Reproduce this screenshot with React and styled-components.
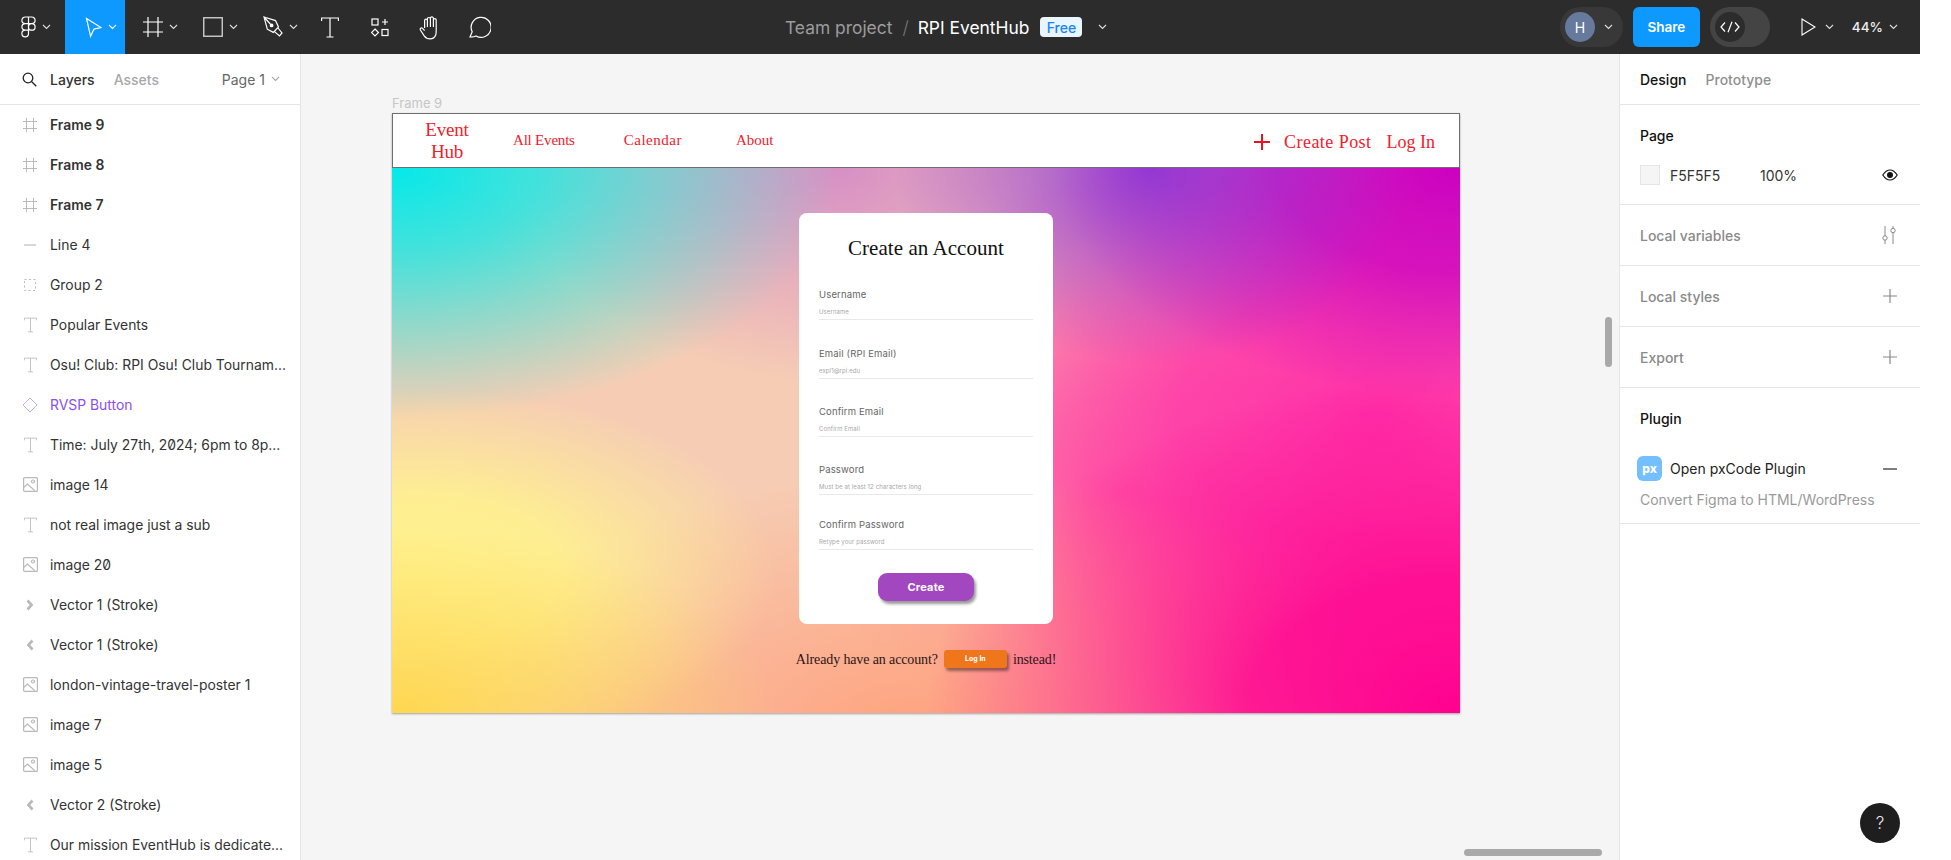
import React from "react";
import styled, { createGlobalStyle } from "styled-components";

const Global = createGlobalStyle`
  html, body { margin: 0; padding: 0; background: #fff; overflow: hidden; }
  * { box-sizing: border-box; }
  body { font-family: Inter, "Liberation Sans", sans-serif; }
`;
const DISPLAY = `"Liberation Serif", serif`;

const Shell = styled.div`
  width: 1920px; height: 860px; display: flex; flex-direction: column; overflow: hidden;
`;
const TopBar = styled.header`
  height: 54px; flex: none; background: #2c2c2c; display: flex; align-items: center; color: #fff;
`;
const ToolGroup = styled.div`
  display: flex; align-items: stretch; height: 54px; flex: none;
`;
const Tool = styled.div`
  width: ${p => p.$w || 60}px; height: 54px; display: flex; align-items: center; justify-content: center; gap: 6px;
  background: ${p => (p.$active ? "#0d99ff" : "transparent")};
  padding-left: ${p => p.$pl || 0}px;
`;
const TitleBlock = styled.div`
  display: flex; align-items: center; margin-left: 280px; flex: none; font-size: 17.4px; height: 54px;
`;
const TeamName = styled.span` color: #9c9c9c; `;
const Slash = styled.span` color: #777; margin: 0 9px 0 10px; font-size: 18px; font-weight: 300; `;
const FileName = styled.span` color: #fff; `;
const FreeBadge = styled.span`
  margin-left: 11px; width: 42px; height: 20px; border-radius: 4px; background: #e9f5ff; color: #1a84f5;
  font-size: 14px; font-weight: 500; display: flex; align-items: center; justify-content: center;
`;
const TitleChevron = styled.span` margin-left: 16px; display: flex; `;
const RightTools = styled.div`
  margin-left: auto; display: flex; align-items: center; height: 54px;
`;
const UserPill = styled.div`
  width: 63px; height: 40px; border-radius: 20px; background: #383838; display: flex; align-items: center; padding-left: 5px; gap: 9px;
`;
const Avatar = styled.div`
  width: 30px; height: 30px; border-radius: 50%; background: #667a9e; display: flex; align-items: center; justify-content: center; font-size: 14px; color: #fff;
`;
const ShareButton = styled.div`
  margin-left: 10px; width: 67px; height: 40px; border-radius: 6px; background: #0d99ff; font-size: 13.5px; font-weight: 600;
  display: flex; align-items: center; justify-content: center; color: #fff;
`;
const CodeToggle = styled.div`
  margin-left: 10px; width: 60px; height: 40px; border-radius: 20px; background: #444; display: flex; align-items: center; padding-left: 5px;
`;
const CodeKnob = styled.div`
  width: 30px; height: 30px; border-radius: 50%; background: #2c2c2c; display: flex; align-items: center; justify-content: center;
`;
const PlayGroup = styled.div`
  margin-left: 31px; display: flex; align-items: center; gap: 9px;
`;
const ZoomGroup = styled.div`
  margin: 0 22px 0 18px; display: flex; align-items: center; gap: 6px; font-size: 13.5px; font-weight: 500; color: #eee;
`;

const Main = styled.div` flex: 1; display: flex; min-height: 0; `;
const LeftPanel = styled.aside`
  width: 301px; flex: none; background: #fff; border-right: 1px solid #e6e6e6; display: flex; flex-direction: column; overflow: hidden;
`;
const PanelHeader = styled.div`
  height: 51px; flex: none; border-bottom: 1px solid #e6e6e6; display: flex; align-items: center; font-size: 14px;
  padding: ${p => p.$pad || "0 0 0 22px"};
`;
const HeaderTab = styled.span`
  font-weight: 500; color: ${p => (p.$on ? p.$on : "#a8a8a8")}; margin-left: ${p => p.$ml || 0}px;
`;
const PageSelect = styled.span`
  margin-left: auto; margin-right: 20px; color: #666; display: flex; align-items: center; gap: 6px;
`;
const LayerList = styled.div` display: flex; flex-direction: column; `;
const LayerRow = styled.div`
  height: 40px; flex: none; display: flex; align-items: center; padding: 0 0 1px 21px; gap: 11px; font-size: 13.9px;
  color: ${p => (p.$purple ? "#8a4ff0" : "#333")}; font-weight: ${p => (p.$bold ? 600 : 400)};
  font-feature-settings: "zero" 1; white-space: nowrap;
`;
const LayerIconBox = styled.span` width: 18px; height: 18px; display: flex; align-items: center; justify-content: center; flex: none; `;

const Canvas = styled.main`
  flex: 1; position: relative; background: #f5f5f5; padding: 41px 0 0 91px; min-width: 0;
`;
const FrameLabel = styled.div` height: 18px; font-size: 13px; color: #c6c6c6; line-height: 16px; `;
const DesignFrame = styled.div`
  width: 1068px; height: 600px; display: flex; flex-direction: column; box-shadow: 0 1px 2px rgba(0,0,0,.35);
`;
const SiteNav = styled.nav`
  height: 55px; flex: none; background: #fff; border: 1px solid #6f6f6f; display: flex; align-items: center;
  font-family: ${DISPLAY}; color: #f2202c; padding: 0 24px 0 0;
`;
const Brand = styled.div`
  width: 108px; text-align: center; font-size: 19px; line-height: 22px; letter-spacing: -.2px; padding-top: 1px;
`;
const SiteLink = styled.span`
  font-size: ${p => p.$size || 15}px; letter-spacing: ${p => p.$ls ?? 0}px; margin-left: ${p => p.$ml || 0}px; white-space: nowrap;
`;
const NavRight = styled.div` margin-left: auto; display: flex; align-items: center; padding-top: 3px; `;
const Hero = styled.section`
  flex: 1; display: flex; flex-direction: column; align-items: center; padding-top: 45px;
  background:
    radial-gradient(ellipse 24% 36% at 71% 0%, rgba(138,48,214,.9), rgba(138,48,214,0) 100%),
    radial-gradient(ellipse 42% 46% at 0% 0%, #04e9e9 0%, rgba(4,233,233,.72) 35%, rgba(4,233,233,0) 100%),
    radial-gradient(ellipse 30% 40% at 42% 0%, rgba(214,140,198,.95) 0%, rgba(214,140,198,0) 100%),
    radial-gradient(ellipse 38% 42% at 100% 0%, #cc00c0 0%, rgba(204,0,192,.8) 45%, rgba(204,0,192,0) 100%),
    radial-gradient(ellipse 50% 62% at 100% 100%, #ff0090 0%, rgba(255,0,144,.85) 40%, rgba(255,0,144,0) 100%),
    radial-gradient(ellipse 36% 34% at 0% 100%, #ffd84f 0%, rgba(255,216,79,0) 100%),
    radial-gradient(ellipse 34% 34% at 2% 74%, #fff28e 0%, rgba(255,242,142,.9) 40%, rgba(255,242,142,0) 100%),
    radial-gradient(ellipse 45% 50% at 50% 105%, #ffa07c 0%, rgba(255,160,124,0) 100%),
    radial-gradient(ellipse 46% 60% at 92% 45%, #ff2fa8 0%, rgba(255,47,168,.8) 40%, rgba(255,47,168,0) 100%),
    radial-gradient(ellipse 30% 45% at 68% 60%, #ff70a0 0%, rgba(255,112,160,0) 100%),
    #f6cdb4;
`;
const FormCard = styled.form`
  width: 254px; height: 411px; flex: none; background: #fff; border-radius: 8px; padding: 22px 20px 0; display: flex; flex-direction: column; align-items: stretch;
`;
const FormTitle = styled.h1`
  margin: 0 0 26px; height: 26px; text-align: center; font: 400 21px/26px ${DISPLAY}; color: #111; letter-spacing: .05px;
`;
const Field = styled.div`
  height: 33px; margin-bottom: ${p => p.$gap}px; display: flex; flex-direction: column; border-bottom: 1px solid #e9e9e9; flex: none;
`;
const FieldLabel = styled.span` font-size: 9.5px; line-height: 14px; margin-top: 1px; color: #666; letter-spacing: .15px; white-space: nowrap; `;
const FieldHint = styled.span` font-size: 6px; line-height: 10px; margin-top: 5px; color: #a8a8a8; letter-spacing: .1px; white-space: nowrap; `;
const CreateButton = styled.div`
  width: 96px; height: 28px; border-radius: 9px; background: #a247bf; color: #fff; font-size: 11px; font-weight: 700; align-self: center;
  display: flex; align-items: center; justify-content: center; box-shadow: 2px 3px 3px rgba(0,0,0,.4); letter-spacing: .2px;
`;
const LoginLine = styled.div`
  margin-top: 26px; display: flex; align-items: center; height: 18px; font: 400 14px/18px ${DISPLAY}; color: #2b1518; white-space: nowrap; letter-spacing: -.12px;
`;
const LoginText = styled.span` padding-top: 2px; `;
const LoginButton = styled.span`
  width: 63px; height: 18px; margin: 0 6px; border-radius: 3px; background: #f0761c; color: #fff; font: 700 7px/18px Inter, sans-serif; text-align: center;
  box-shadow: 2px 3px 3px rgba(0,0,0,.4); letter-spacing: 0;
`;
const VScroll = styled.div`
  position: absolute; right: 7px; top: 263px; width: 7px; height: 50px; border-radius: 4px; background: #a9a9a9;
`;
const HScroll = styled.div`
  position: absolute; left: 1163px; bottom: 4px; width: 138px; height: 7px; border-radius: 4px; background: #a9a9a9;
`;

const RightPanel = styled.aside`
  width: 301px; flex: none; background: #fff; border-left: 1px solid #e6e6e6; position: relative; display: flex; flex-direction: column;
`;
const Section = styled.section`
  height: ${p => p.$h}px; flex: none; border-bottom: 1px solid #e6e6e6; padding: ${p => p.$pad || "0 23px 0 20px"}; display: flex;
  flex-direction: ${p => (p.$column ? "column" : "row")}; align-items: ${p => (p.$column ? "stretch" : "center")}; justify-content: ${p => (p.$column ? "flex-start" : "space-between")};
`;
const SectionTitle = styled.span`
  font-size: 14px; font-weight: 500; color: ${p => (p.$muted ? "#8a8a8a" : "#111")};
`;
const SwatchRow = styled.div` display: flex; align-items: center; margin-top: 21px; font-size: 14px; color: #333; `;
const Swatch = styled.span` width: 20px; height: 20px; background: #f5f5f5; border: 1px solid #e6e6e6; flex: none; `;
const HexValue = styled.span` margin-left: 10px; width: 90px; `;
const RowEnd = styled.span` margin-left: auto; display: flex; `;
const PluginRow = styled.div` display: flex; align-items: center; margin: 29px 0 0 -3px; font-size: 14px; color: #222; gap: 8px; `;
const PluginIcon = styled.span`
  width: 25px; height: 25px; border-radius: 6px; background: #73bfff; color: #fff; font-size: 12px; font-weight: 800; display: flex; align-items: center; justify-content: center;
`;
const PluginNote = styled.div` margin-top: 10px; font-size: 14px; color: #9a9a9a; white-space: nowrap; `;
const HelpButton = styled.div`
  position: absolute; right: 20px; bottom: 17px; width: 40px; height: 40px; border-radius: 50%; background: #1e1e1e; color: #e8e8e8;
  display: flex; align-items: center; justify-content: center; font-size: 17px; font-weight: 300;
`;

const Svg = ({ w = 16, h = 16, vb, children, stroke = "#fff", sw = 1.2 }) => (
  <svg width={w} height={h} viewBox={vb || `0 0 ${w} ${h}`} fill="none" stroke={stroke} strokeWidth={sw}>{children}</svg>
);
const Chevron = ({ color = "#ddd" }) => (
  <Svg w={9} h={6} stroke={color} sw={1.1}><path d="M1 1l3.5 3.5L8 1" /></Svg>
);
const FigmaLogo = () => (
  <Svg w={15} h={22}>
    <path d="M7.5 1H4.2a3.3 3.3 0 0 0 0 6.6h3.3V1zM7.5 1h3.3a3.3 3.3 0 0 1 0 6.6H7.5V1zM7.5 7.6H4.2a3.3 3.3 0 0 0 0 6.6h3.3V7.6zM14.1 10.9a3.3 3.3 0 1 1-6.6 0 3.3 3.3 0 0 1 6.6 0zM7.5 14.2H4.2a3.3 3.3 0 1 0 3.3 3.3v-3.3z" />
  </Svg>
);
const Arrow = () => <Svg w={17} h={21}><path d="M1.5 1.5l14.5 9-7 1.6-3.4 7.2L1.5 1.5z" /></Svg>;
const FrameTool = ({ s = 20, c = "#fff", sw = 1.2 }) => (
  <Svg w={s} h={s} vb="0 0 20 20" stroke={c} sw={sw * (20 / s)}><path d="M5 0v20M15 0v20M0 5h20M0 15h20" /></Svg>
);
const RectTool = () => <Svg w={20} h={20}><rect x=".75" y=".75" width="18.5" height="18.5" stroke="#ccc" strokeWidth="1.4" /></Svg>;
const PenTool = () => (
  <Svg w={20} h={22}><path d="M1 1l11.5 3.6 3 6.4-5.2 5.4-6-3.2L1 1zM1 1l6.3 7M15 12l4 5-2.5 3-5-4.4" /><circle cx="8.6" cy="9.4" r="1.3" fill="#fff" /></Svg>
);
const TextTool = ({ s = 18, c = "#fff" }) => (
  <Svg w={s} h={s + 3} vb="0 0 18 21" stroke={c} sw={1.2}><path d="M.6 4V1h16.8v3M9 1v19M5.5 20h7" /></Svg>
);
const Components = () => (
  <Svg w={18} h={19}>
    <rect x="1" y="1" width="6" height="6" /><path d="M14 1v6M11 4h6" />
    <path d="M4 11l3.5 3.5L4 18 .5 14.5z" /><rect x="11" y="11.5" width="6" height="6" />
  </Svg>
);
const HandTool = () => (
  <Svg w={23} h={25}>
    <path d="M5.6 13V5.5a1.4 1.4 0 0 1 2.8 0V4a1.5 1.5 0 0 1 3 0v-.6a1.5 1.5 0 0 1 3 0V5a1.4 1.4 0 0 1 2.8 0v9c0 1 .2 4-.5 6s-2.6 3.8-5.7 3.8c-3 0-4.4-1-5.8-3L1.4 15c-.8-1.2.7-2.8 2-1.8l2.2 2.4M8.4 5.5V12M11.4 4v8M14.4 3.5V12" />
  </Svg>
);
const Comment = () => (
  <Svg w={22} h={22}><path d="M1 21l2.2-5.2A10 10 0 1 1 7 19.9c-1 .8-4 1.1-6 1.1z" /></Svg>
);
const CodeGlyph = () => <Svg w={20} h={12}><path d="M5 1.5L1 6l4 4.5M15 1.5L19 6l-4 4.5M12 .8L8 11.2" /></Svg>;
const Play = () => <Svg w={15} h={18} sw={1.1}><path d="M1 1v16l13-8z" /></Svg>;
const Search = () => <Svg w={15} h={15} stroke="#222" sw={1.3}><circle cx="6" cy="6" r="4.8" /><path d="M9.5 9.5l4.8 4.8" /></Svg>;

const G = "#b9b9b9";
const LayerImage = () => (
  <Svg w={15} h={15} stroke={G} sw={1.2}><rect x=".6" y=".6" width="13.8" height="13.8" rx="1" /><path d="M.6 10.5l4-3.5 7 6.5" /><circle cx="10" cy="4.5" r="1.5" /></Svg>
);
const LayerGroup = () => (
  <Svg w={12} h={12} stroke={G} sw={1}><rect x=".5" y=".5" width="11" height="11" strokeDasharray="2 2.5" /></Svg>
);
const LayerLine = () => <Svg w={12} h={2} stroke={G} sw={1.1}><path d="M0 1h12" /></Svg>;
const LayerDiamond = () => <Svg w={16} h={16} stroke="#c4aeea" sw={1}><path d="M8 1l7 7-7 7-7-7z" /></Svg>;
const LayerVec = ({ left }) => (
  <Svg w={8} h={12} stroke={G} sw={2.6}><path d={left ? "M6.5 1.5L2.4 6l4.1 4.5" : "M1.5 1.5L5.6 6l-4.1 4.5"} /></Svg>
);
const layerIcons = {
  frame: <FrameTool s={14} c={G} sw={1} />,
  line: <LayerLine />,
  group: <LayerGroup />,
  text: <TextTool s={13} c={G} />,
  diamond: <LayerDiamond />,
  image: <LayerImage />,
  right: <LayerVec />,
  left: <LayerVec left />,
};

const layers = [
  ["frame", "Frame 9", "bold"], ["frame", "Frame 8", "bold"], ["frame", "Frame 7", "bold"],
  ["line", "Line 4"], ["group", "Group 2"], ["text", "Popular Events"],
  ["text", "Osu! Club: RPI Osu! Club Tournam..."], ["diamond", "RVSP Button", "purple"],
  ["text", "Time: July 27th, 2024; 6pm to 8p..."], ["image", "image 14"], ["text", "not real image just a sub"],
  ["image", "image 20"], ["right", "Vector 1 (Stroke)"], ["left", "Vector 1 (Stroke)"],
  ["image", "london-vintage-travel-poster 1"], ["image", "image 7"], ["image", "image 5"],
  ["left", "Vector 2 (Stroke)"], ["text", "Our mission EventHub is dedicate..."],
];
const fields = [
  ["Username", "Username", 26], ["Email (RPI Email)", "expl1@rpi.edu", 25], ["Confirm Email", "Confirm Email", 25],
  ["Password", "Must be at least 12 characters long", 22], ["Confirm Password", "Retype your password", 23],
];
const Plus = ({ c = "#8a8a8a", s = 14, sw = 1.2 }) => <Svg w={s} h={s} stroke={c} sw={sw}><path d={`M${s / 2} 0v${s}M0 ${s / 2}h${s}`} /></Svg>;

export default function App() {
  return (
    <Shell>
      <Global />
      <TopBar>
        <ToolGroup>
          <Tool $w={65} $pl={6}><FigmaLogo /><Chevron /></Tool>
          <Tool $active $pl={12}><Arrow /><Chevron color="#fff" /></Tool>
          <Tool $pl={10}><FrameTool /><Chevron /></Tool>
          <Tool $pl={10}><RectTool /><Chevron /></Tool>
          <Tool $pl={10}><PenTool /><Chevron /></Tool>
          <Tool $w={50}><TextTool /></Tool>
          <Tool $w={50}><Components /></Tool>
          <Tool $w={50}><HandTool /></Tool>
          <Tool $w={50}><Comment /></Tool>
        </ToolGroup>
        <TitleBlock>
          <TeamName>Team project</TeamName>
          <Slash>/</Slash>
          <FileName>RPI EventHub</FileName>
          <FreeBadge>Free</FreeBadge>
          <TitleChevron><Chevron /></TitleChevron>
        </TitleBlock>
        <RightTools>
          <UserPill><Avatar>H</Avatar><Chevron /></UserPill>
          <ShareButton>Share</ShareButton>
          <CodeToggle><CodeKnob><CodeGlyph /></CodeKnob></CodeToggle>
          <PlayGroup><Play /><Chevron /></PlayGroup>
          <ZoomGroup>44%<Chevron /></ZoomGroup>
        </RightTools>
      </TopBar>
      <Main>
        <LeftPanel>
          <PanelHeader>
            <Search />
            <HeaderTab $on="#333" $ml={13}>Layers</HeaderTab>
            <HeaderTab $ml={19}>Assets</HeaderTab>
            <PageSelect>Page 1 <Chevron color="#aaa" /></PageSelect>
          </PanelHeader>
          <LayerList>
            {layers.map(([icon, name, mod], i) => (
              <LayerRow key={i} $bold={mod === "bold"} $purple={mod === "purple"}>
                <LayerIconBox>{layerIcons[icon]}</LayerIconBox>
                {name}
              </LayerRow>
            ))}
          </LayerList>
        </LeftPanel>
        <Canvas>
          <FrameLabel>Frame 9</FrameLabel>
          <DesignFrame>
            <SiteNav>
              <Brand>Event<br />Hub</Brand>
              <SiteLink $ml={12} $ls={-0.2}>All Events</SiteLink>
              <SiteLink $ml={49} $ls={0.5}>Calendar</SiteLink>
              <SiteLink $ml={54}>About</SiteLink>
              <NavRight>
                <Plus c="#ee1122" s={16} sw={2} />
                <SiteLink $size={18} $ml={14} $ls={0.45}>Create Post</SiteLink>
                <SiteLink $size={18} $ml={15}>Log In</SiteLink>
              </NavRight>
            </SiteNav>
            <Hero>
              <FormCard>
                <FormTitle>Create an Account</FormTitle>
                {fields.map(([label, hint, gap]) => (
                  <Field key={label} $gap={gap}>
                    <FieldLabel>{label}</FieldLabel>
                    <FieldHint>{hint}</FieldHint>
                  </Field>
                ))}
                <CreateButton>Create</CreateButton>
              </FormCard>
              <LoginLine>
                <LoginText>Already have an account?</LoginText>
                <LoginButton>Log In</LoginButton>
                <LoginText>instead!</LoginText>
              </LoginLine>
            </Hero>
          </DesignFrame>
          <VScroll />
          <HScroll />
        </Canvas>
        <RightPanel>
          <PanelHeader $pad="0 0 0 20px">
            <SectionTitle>Design</SectionTitle>
            <HeaderTab $on="#8f8f8f" $ml={19}>Prototype</HeaderTab>
          </PanelHeader>
          <Section $h={100} $column $pad="22px 22px 0 20px">
            <SectionTitle>Page</SectionTitle>
            <SwatchRow>
              <Swatch /><HexValue>F5F5F5</HexValue>100%
              <RowEnd>
                <Svg w={16} h={12} stroke="#111" sw={1.2}><path d="M.8 6C3 2.6 5.4 1 8 1s5 1.6 7.2 5C13 9.4 10.6 11 8 11S3 9.4.8 6z" /><circle cx="8" cy="6" r="2.4" fill="#111" /></Svg>
              </RowEnd>
            </SwatchRow>
          </Section>
          <Section $h={61}>
            <SectionTitle $muted>Local variables</SectionTitle>
            <Svg w={16} h={18} stroke="#8a8a8a" sw={1}><path d="M4 0v10M4 14v4M12 0v2M12 7v11" /><circle cx="4" cy="12" r="2.2" /><circle cx="12" cy="4.5" r="2.2" /></Svg>
          </Section>
          <Section $h={61}>
            <SectionTitle $muted>Local styles</SectionTitle>
            <Plus />
          </Section>
          <Section $h={61}>
            <SectionTitle $muted>Export</SectionTitle>
            <Plus />
          </Section>
          <Section $h={136} $column $pad="22px 23px 0 20px">
            <SectionTitle>Plugin</SectionTitle>
            <PluginRow>
              <PluginIcon>px</PluginIcon>Open pxCode Plugin
              <RowEnd><Svg w={14} h={2} stroke="#555" sw={1.5}><path d="M0 1h14" /></Svg></RowEnd>
            </PluginRow>
            <PluginNote>Convert Figma to HTML/WordPress</PluginNote>
          </Section>
          <HelpButton>?</HelpButton>
        </RightPanel>
      </Main>
    </Shell>
  );
}
